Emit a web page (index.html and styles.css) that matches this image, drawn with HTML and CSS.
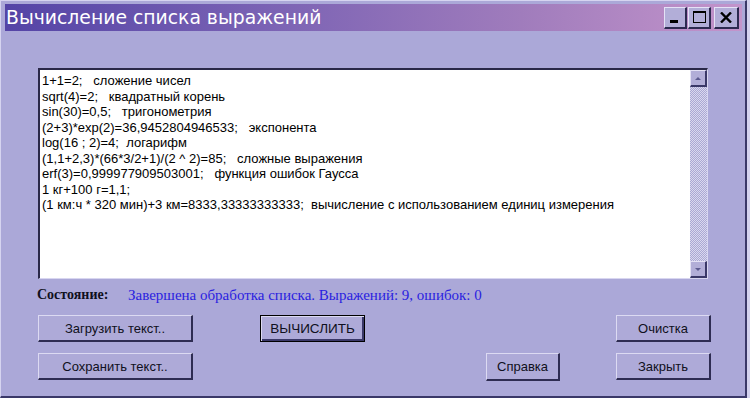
FILE: index.html
```html
<!DOCTYPE html>
<html lang="ru">

<head>
    <meta charset="UTF-8">
    <title>Вычисление списка выражений</title>
    <link rel="stylesheet" href="styles.css">
</head>

<body>
    <div class="window">
        <div class="titlebar">
            <span class="title">Вычисление списка выражений</span>
            <div class="title-buttons">
                <span class="tbtn"><span class="ico-min"></span></span>
                <span class="tbtn"><span class="ico-max"></span></span>
                <span class="tbtn tbtn-close">
                    <svg width="12" height="11" viewBox="0 0 12 11">
                        <path d="M1 0.5 L11 10.5 M11 0.5 L1 10.5" stroke="#000" stroke-width="2.4" fill="none"/>
                    </svg>
                </span>
            </div>
        </div>

        <div class="editor">
            <div class="editor-text">
                <div>1+1=2;&nbsp;&nbsp; сложение чисел</div>
                <div>sqrt(4)=2;&nbsp;&nbsp; квадратный корень</div>
                <div>sin(30)=0,5;&nbsp;&nbsp; тригонометрия</div>
                <div>(2+3)*exp(2)=36,9452804946533;&nbsp;&nbsp; экспонента</div>
                <div>log(16 ; 2)=4;&nbsp; логарифм</div>
                <div>(1,1+2,3)*(66*3/2+1)/(2 ^ 2)=85;&nbsp;&nbsp; сложные выражения</div>
                <div>erf(3)=0,999977909503001;&nbsp;&nbsp; функция ошибок Гаусса</div>
                <div>1 кг+100 г=1,1;</div>
                <div>(1 км:ч * 320 мин)+3 км=8333,33333333333;&nbsp; вычисление с использованием единиц измерения</div>
            </div>
            <div class="scrollbar">
                <span class="sb-btn"><span class="arrow-up"></span></span>
                <span class="sb-track"></span>
                <span class="sb-btn"><span class="arrow-down"></span></span>
            </div>
        </div>

        <div class="status">
            <span class="status-label">Состояние:</span>
            <span class="status-text">Завершена обработка списка. Выражений: 9, ошибок: 0</span>
        </div>

        <div class="buttons">
            <button class="btn btn-wide">Загрузить текст..</button>
            <button class="btn btn-default">ВЫЧИСЛИТЬ</button>
            <span></span>
            <button class="btn btn-right">Очистка</button>
            <button class="btn btn-wide">Сохранить текст..</button>
            <span></span>
            <button class="btn btn-help">Справка</button>
            <button class="btn btn-right">Закрыть</button>
        </div>
    </div>
</body>

</html>
```

FILE: styles.css
```css
body {
    margin: 0;
    background-color: #d4d2ee;
    font-family: "Liberation Sans", Arial, sans-serif;
}

.window {
    width: 747px;
    height: 398px;
    box-sizing: border-box;
    padding: 3px 0 0 4px;
    background-color: #aba8d8;
    border-top: 1px solid #d6d4f0;
    border-left: 1px solid #d6d4f0;
    border-right: 2px solid #3a3868;
    border-bottom: 2px solid #3a3868;
}

.titlebar {
    display: flex;
    align-items: center;
    justify-content: space-between;
    height: 27px;
    margin-right: 3px;
    background: linear-gradient(to right, #5444a6 0%, #7a62b4 35%, #a07cbc 70%, #c394cb 100%);
}

.title {
    color: #fff;
    font-family: "DejaVu Sans", Verdana, sans-serif;
    font-size: 18.8px;
    padding-left: 1px;
}

.title-buttons {
    display: flex;
    gap: 1px;
    margin-right: 3px;
}

.tbtn {
    display: flex;
    align-items: center;
    justify-content: center;
    width: 20px;
    height: 19px;
    background-color: #b2aed8;
    border-top: 1px solid #e4e2f6;
    border-left: 1px solid #e4e2f6;
    border-right: 2px solid #2c2a50;
    border-bottom: 2px solid #2c2a50;
}

.tbtn-close {
    margin-left: 2px;
    width: 22px;
}

.ico-min {
    width: 8px;
    height: 3px;
    background: #000;
    margin-top: 9px;
    margin-right: 2px;
}

.ico-max {
    width: 11px;
    height: 9px;
    border: 1px solid #000;
    border-top-width: 2px;
}

.editor {
    display: flex;
    width: 670px;
    height: 211px;
    margin: 37px 0 0 33px;
    box-sizing: border-box;
    background-color: #fff;
    border-top: 2px solid #2a2848;
    border-left: 2px solid #2a2848;
    border-right: 1px solid #d8d6f0;
    border-bottom: 1px solid #d8d6f0;
}

.editor-text {
    flex: 1;
    padding: 3px 2px;
    font-size: 13px;
    line-height: 15.5px;
    color: #000;
    white-space: nowrap;
}

/* checkered track like the classic scrollbar */
.scrollbar {
    display: flex;
    flex-direction: column;
    width: 17px;
    background-color: #dad8ee;
    background-image: conic-gradient(#aaa8d4 25%, transparent 0 50%, #aaa8d4 0 75%, transparent 0);
    background-size: 2px 2px;
}

.sb-btn {
    display: flex;
    align-items: center;
    justify-content: center;
    height: 17px;
    box-sizing: border-box;
    background-color: #b2aed8;
    border-top: 1px solid #e4e2f6;
    border-left: 1px solid #e4e2f6;
    border-right: 2px solid #3a3868;
    border-bottom: 2px solid #3a3868;
}

.sb-track {
    flex: 1;
}

.arrow-up {
    border-left: 3px solid transparent;
    border-right: 3px solid transparent;
    border-bottom: 3px solid #5c5a90;
}

.arrow-down {
    border-left: 3px solid transparent;
    border-right: 3px solid transparent;
    border-top: 3px solid #5c5a90;
}

.status {
    display: flex;
    height: 18px;
    margin: 8px 0 0 32px;
    font-family: "Liberation Serif", "Times New Roman", serif;
    font-size: 15px;
}

.status-label {
    width: 91px;
    font-weight: bold;
    font-size: 14px;
    color: #101020;
}

.status-text {
    color: #2a1ee0;
}

.buttons {
    display: grid;
    grid-template-columns: 222px 226px 130px 95px;
    row-gap: 11px;
    margin: 10px 0 0 33px;
}

.btn {
    height: 27px;
    padding: 0;
    font-family: "Liberation Sans", Arial, sans-serif;
    font-size: 13px;
    color: #101020;
    background-color: #aeaad8;
    border-top: 1px solid #dcdaf2;
    border-left: 1px solid #dcdaf2;
    border-right: 2px solid #2e2c52;
    border-bottom: 2px solid #2e2c52;
    border-radius: 0;
}

.btn-wide {
    width: 155px;
}

.btn-default {
    width: 105px;
    font-size: 13.5px;
    border: 1px solid #000;
    box-shadow: inset 1px 1px 0 #dcdaf2, inset -2px -2px 0 #3a3868;
}

.btn-help {
    width: 74px;
    height: 28px;
}

.btn-right {
    width: 95px;
}
```
